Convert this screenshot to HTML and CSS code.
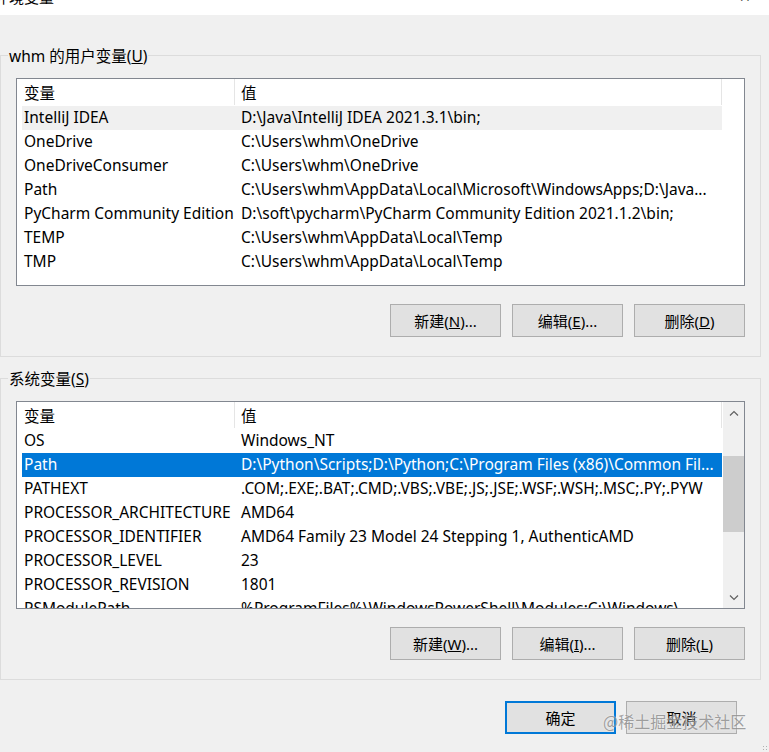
FILE: index.html
```html
<!DOCTYPE html>
<html lang="zh-CN">
<head>
<meta charset="utf-8">
<title>环境变量</title>
<link rel="stylesheet" href="styles.css">
</head>
<body>
<div class="titlebar">
  <span class="title">环境变量</span>
  <span class="close">✕</span>
</div>

<div class="group group-user">
  <div class="group-label">whm 的用户变量(<u>U</u>)</div>
  <div class="list">
    <div class="rows">
      <div class="header">
        <div class="hcell name">变量</div>
        <div class="hcell value">值</div>
      </div>
      <div class="row inactive"><div class="name">IntelliJ IDEA</div><div class="value">D:\Java\IntelliJ IDEA 2021.3.1\bin;</div></div>
      <div class="row"><div class="name">OneDrive</div><div class="value">C:\Users\whm\OneDrive</div></div>
      <div class="row"><div class="name">OneDriveConsumer</div><div class="value">C:\Users\whm\OneDrive</div></div>
      <div class="row"><div class="name">Path</div><div class="value">C:\Users\whm\AppData\Local\Microsoft\WindowsApps;D:\Java...</div></div>
      <div class="row"><div class="name">PyCharm Community Edition</div><div class="value">D:\soft\pycharm\PyCharm Community Edition 2021.1.2\bin;</div></div>
      <div class="row"><div class="name">TEMP</div><div class="value">C:\Users\whm\AppData\Local\Temp</div></div>
      <div class="row"><div class="name">TMP</div><div class="value">C:\Users\whm\AppData\Local\Temp</div></div>
    </div>
  </div>
  <div class="buttons">
    <button class="btn">新建(<u>N</u>)...</button>
    <button class="btn">编辑(<u>E</u>)...</button>
    <button class="btn">删除(<u>D</u>)</button>
  </div>
</div>

<div class="group group-sys">
  <div class="group-label">系统变量(<u>S</u>)</div>
  <div class="list">
    <div class="rows">
      <div class="header">
        <div class="hcell name">变量</div>
        <div class="hcell value">值</div>
      </div>
      <div class="row"><div class="name">OS</div><div class="value">Windows_NT</div></div>
      <div class="row active"><div class="name">Path</div><div class="value">D:\Python\Scripts;D:\Python;C:\Program Files (x86)\Common Fil...</div></div>
      <div class="row"><div class="name">PATHEXT</div><div class="value">.COM;.EXE;.BAT;.CMD;.VBS;.VBE;.JS;.JSE;.WSF;.WSH;.MSC;.PY;.PYW</div></div>
      <div class="row"><div class="name">PROCESSOR_ARCHITECTURE</div><div class="value">AMD64</div></div>
      <div class="row"><div class="name">PROCESSOR_IDENTIFIER</div><div class="value">AMD64 Family 23 Model 24 Stepping 1, AuthenticAMD</div></div>
      <div class="row"><div class="name">PROCESSOR_LEVEL</div><div class="value">23</div></div>
      <div class="row"><div class="name">PROCESSOR_REVISION</div><div class="value">1801</div></div>
      <div class="row"><div class="name">PSModulePath</div><div class="value">%ProgramFiles%\WindowsPowerShell\Modules;C:\Windows\...</div></div>
    </div>
    <div class="scrollbar">
      <div class="sb-btn">
        <svg width="10" height="6" viewBox="0 0 10 6"><path d="M1 5.5 L5 1.5 L9 5.5" fill="none" stroke="#606060" stroke-width="1.2"/></svg>
      </div>
      <div class="sb-track">
        <div class="sb-thumb"></div>
      </div>
      <div class="sb-btn">
        <svg width="10" height="6" viewBox="0 0 10 6"><path d="M1 0.5 L5 4.5 L9 0.5" fill="none" stroke="#606060" stroke-width="1.2"/></svg>
      </div>
    </div>
  </div>
  <div class="buttons">
    <button class="btn">新建(<u>W</u>)...</button>
    <button class="btn">编辑(<u>I</u>)...</button>
    <button class="btn">删除(<u>L</u>)</button>
  </div>
</div>

<div class="dialog-buttons">
  <button class="btn default">确定</button>
  <button class="btn">取消</button>
</div>

<div class="watermark">@稀土掘金技术社区</div>
<div class="grip"></div>
</body>
</html>
```

FILE: styles.css
```css
* { box-sizing: border-box; }

html, body { margin: 0; padding: 0; }

body {
  width: 769px;
  height: 752px;
  overflow: hidden;
  position: relative;
  background: #f0f0f0;
  color: #000;
  font-family: "Noto Sans", "Noto Sans CJK SC", sans-serif;
  font-size: 15px;
}

.titlebar {
  height: 15px;
  background: #fff;
  display: flex;
  justify-content: space-between;
  overflow: hidden;
}

.title {
  margin: -13px 0 0 -6px;
  line-height: 20px;
  font-family: "Noto Sans CJK SC", sans-serif;
}

.close {
  margin: -13px 18px 0 0;
  line-height: 20px;
  font-size: 14px;
  color: #222;
}

.group {
  width: 761px;
  border: 1px solid #dcdcdc;
  padding: 0 15px 19px;
}

.group-user { margin-top: 40px; }
.group-sys { margin-top: 21px; }

.group-label {
  display: table;
  height: 20px;
  margin: -10px 0 0 -8px;
  padding: 0 1px;
  line-height: 20px;
  font-size: 15.5px;
  background: #f0f0f0;
}

.list {
  margin-top: 12px;
  height: 208px;
  border: 1px solid #828790;
  background: #fff;
  overflow: hidden;
  display: flex;
  font-size: 15.5px;
}

.rows {
  flex: 1;
  padding-left: 5px;
  overflow: hidden;
}

.header, .row {
  width: 700px;
  display: grid;
  grid-template-columns: 213px 1fr;
  white-space: nowrap;
}

.header {
  height: 27px;
}

.hcell {
  border-right: 1px solid #e5e5e5;
  line-height: 25px;
  padding-top: 2px;
  height: 26px;
}

.name { padding-left: 2px; overflow: hidden; }
.value { padding-left: 6px; overflow: hidden; }

.row {
  height: 24px;
  line-height: 23px;
}

.row.inactive { background: #f0f0f0; }
.row.active { background: #0078d7; color: #fff; }

.scrollbar {
  width: 21px;
  background: #f0f0f0;
  display: flex;
  flex-direction: column;
}

.sb-btn {
  height: 21px;
  display: flex;
  align-items: center;
  justify-content: center;
}

.sb-track {
  flex: 1;
  padding-top: 33px;
}

.sb-thumb {
  height: 76px;
  background: #cdcdcd;
}

.buttons {
  margin-top: 18px;
  display: flex;
  justify-content: flex-end;
  gap: 11px;
}

.btn {
  width: 111px;
  height: 33px;
  margin: 0;
  padding: 0;
  border: 1px solid #adadad;
  background: #e1e1e1;
  color: #000;
  font-family: "Noto Sans", "Noto Sans CJK SC", sans-serif;
  font-size: 15px;
}

.btn.default {
  border: 2px solid #0078d7;
}

.dialog-buttons {
  margin-top: 21px;
  padding-right: 32px;
  display: flex;
  justify-content: flex-end;
  gap: 10px;
}

.watermark {
  position: absolute;
  left: 603px;
  top: 709px;
  font-family: "Noto Sans CJK SC", sans-serif;
  font-size: 16px;
  line-height: 24px;
  color: rgba(130, 130, 130, 0.75);
  text-shadow: 0 0 2px rgba(255, 255, 255, 0.8);
}

.grip {
  position: absolute;
  right: 1px;
  bottom: 1px;
  width: 6px;
  height: 6px;
  background: radial-gradient(circle, #b0b0b0 0.8px, transparent 1px) 0 0 / 3px 3px;
}
```
